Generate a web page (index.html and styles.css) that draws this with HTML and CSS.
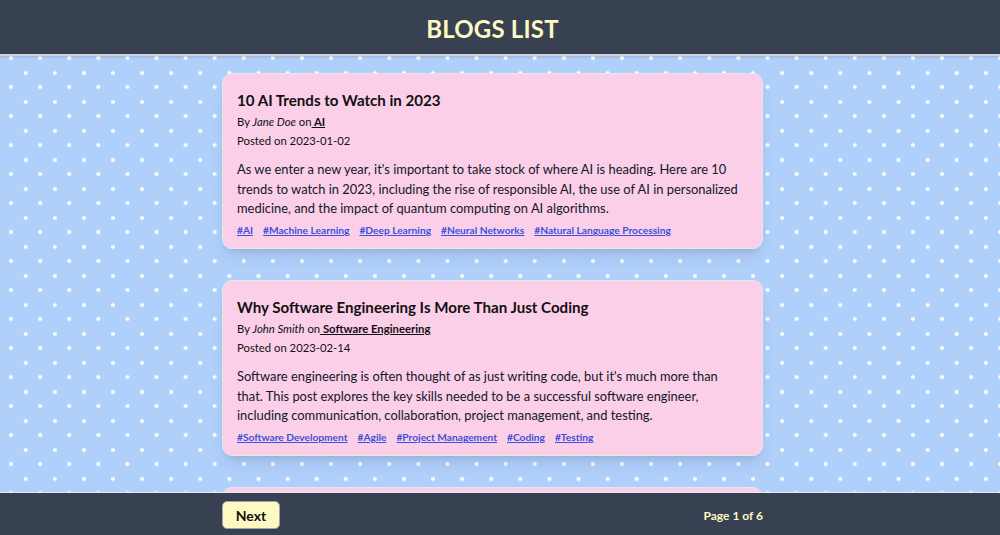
FILE: index.html
```html
<!DOCTYPE html>
<html lang="en">
<head>
<meta charset="utf-8">
<title>Blogs List</title>
<link rel="stylesheet" href="styles.css">
</head>
<body>
<div class="app">
  <header class="topbar">
    <h1 class="title">BLOGS LIST</h1>
  </header>
  <main class="content">
    <div class="column">
      <article class="card">
        <h2 class="card-title">10 AI Trends to Watch in 2023</h2>
        <p class="meta">By <em>Jane Doe</em> on<a class="cat" href="#"> AI</a></p>
        <p class="meta">Posted on 2023-01-02</p>
        <p class="body">As we enter a new year, it's important to take stock of where AI is heading. Here are 10 trends to watch in 2023, including the rise of responsible AI, the use of AI in personalized medicine, and the impact of quantum computing on AI algorithms.</p>
        <div class="tags">
          <a href="#">#AI</a>
          <a href="#">#Machine Learning</a>
          <a href="#">#Deep Learning</a>
          <a href="#">#Neural Networks</a>
          <a href="#">#Natural Language Processing</a>
        </div>
      </article>
      <article class="card">
        <h2 class="card-title">Why Software Engineering Is More Than Just Coding</h2>
        <p class="meta">By <em>John Smith</em> on<a class="cat" href="#"> Software Engineering</a></p>
        <p class="meta">Posted on 2023-02-14</p>
        <p class="body">Software engineering is often thought of as just writing code, but it's much more than that. This post explores the key skills needed to be a successful software engineer, including communication, collaboration, project management, and testing.</p>
        <div class="tags">
          <a href="#">#Software Development</a>
          <a href="#">#Agile</a>
          <a href="#">#Project Management</a>
          <a href="#">#Coding</a>
          <a href="#">#Testing</a>
        </div>
      </article>
      <article class="card"></article>
    </div>
  </main>
  <footer class="bottombar">
    <div class="pager">
      <button class="next" type="button">Next</button>
      <span class="page-info">Page 1 of 6</span>
    </div>
  </footer>
</div>
</body>
</html>
```
FILE: styles.css
```css
* { box-sizing: border-box; }
html, body { margin: 0; padding: 0; height: 100%; }
body {
  font-family: Lato, "Open Sans", "Liberation Sans", sans-serif;
  color: #111827;
  overflow: hidden;
}
.app {
  height: 535px;
  display: flex;
  flex-direction: column;
}
.topbar {
  height: 56px;
  flex: none;
  background: #374151;
  border-bottom: 2px solid #d1d5db;
  display: flex;
  align-items: center;
  justify-content: center;
  padding: 3px 15px 0 0;
  position: relative;
  z-index: 2;
  box-shadow: 0 1px 3px rgba(0,0,0,0.15);
}
.title {
  margin: 0;
  font-size: 24px;
  font-weight: 700;
  color: #fef9c3;
  letter-spacing: 0.2px;
}
.content {
  flex: 1;
  overflow: hidden;
  background-color: #b0d0fc;
  background-image:
    radial-gradient(circle, #ffffff 1.6px, rgba(255,255,255,0) 2.3px),
    radial-gradient(circle, #ffffff 1.6px, rgba(255,255,255,0) 2.3px);
  background-size: 29.1px 29px, 29.1px 29px;
  background-position: -3.5px -12.5px, 11.2px 2.5px;
  padding: 17px 15px 0 0;
}
.column {
  width: 541px;
  margin: 0 auto;
  display: flex;
  flex-direction: column;
  gap: 31px;
}
.card {
  background: #fbcfe8;
  border: 1px solid #e5e7eb;
  border-radius: 10px;
  padding: 14px 20px 12px 14px;
  box-shadow: 0 10px 15px -3px rgba(0,0,0,0.1), 0 4px 6px -4px rgba(0,0,0,0.1);
  height: 176px;
  flex: none;
}
.card-title {
  margin: 0;
  font-size: 15.1px;
  line-height: 24px;
  font-weight: 700;
  color: #111;
  white-space: nowrap;
}
.meta {
  margin: 0;
  font-size: 11.3px;
  line-height: 19px;
  color: #111;
}
.meta em { font-style: italic; }
.cat {
  color: #111;
  font-weight: 700;
  text-decoration: underline;
}
.body {
  margin: 10px 0 4.5px;
  font-size: 12.9px;
  line-height: 19.5px;
  color: #111827;
}
.tags {
  display: flex;
  gap: 10px;
  font-size: 10.2px;
  line-height: 14px;
  font-weight: 700;
  white-space: nowrap;
}
.tags a {
  color: #3b50dc;
  text-decoration: underline;
}
.bottombar {
  height: 43px;
  flex: none;
  background: #374151;
  border-top: 1px solid #e5e7eb;
  padding: 2px 15px 0 0;
  display: flex;
  align-items: center;
  position: relative;
  z-index: 2;
}
.pager {
  width: 541px;
  margin: 0 auto;
  display: flex;
  align-items: center;
  justify-content: space-between;
}
.next {
  font-family: inherit;
  width: 58px;
  height: 28px;
  background: #fef9c3;
  border: 1px solid #9ca3af;
  border-radius: 5px;
  font-size: 14px;
  font-weight: 700;
  color: #111;
  padding: 0;
}
.page-info {
  font-size: 12px;
  font-weight: 700;
  color: #fef9c3;
}
```
